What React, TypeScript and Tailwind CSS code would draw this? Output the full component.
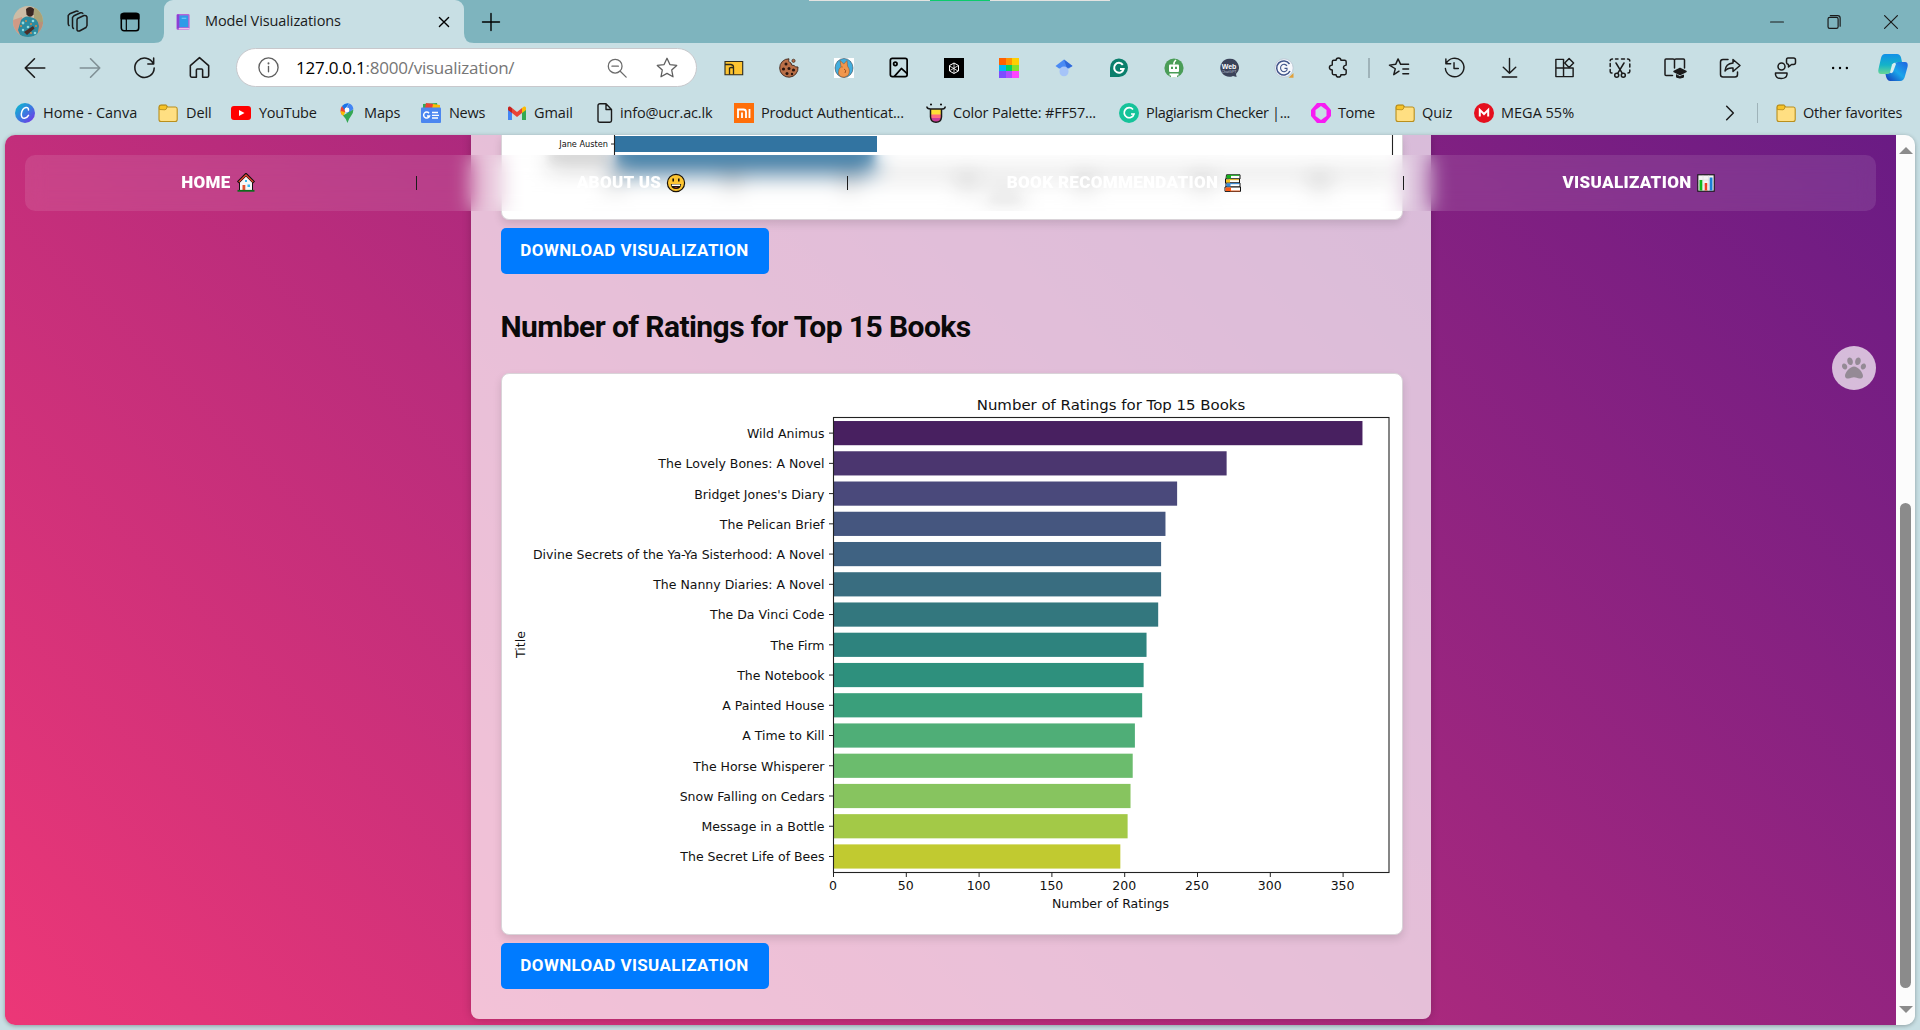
import React from "react";
import { FaPaw } from "react-icons/fa";

type P = { children?: React.ReactNode; className?: string; size?: number; sw?: number };

/* 24-unit outline icon */
const Line = ({ children, className = "text-[#1b1b1b]", size = 24, sw = 1.5 }: P) => (
  <svg width={size} height={size} viewBox="0 0 24 24" fill="none" stroke="currentColor" strokeWidth={sw} strokeLinecap="round" strokeLinejoin="round" className={`shrink-0 ${className}`}>
    {children}
  </svg>
);
/* 20-unit filled icon */
const Pic = ({ children, size = 20, className = "" }: P) => (
  <svg width={size} height={size} viewBox="0 0 20 20" className={`shrink-0 ${className}`}>
    {children}
  </svg>
);
const Cell = ({ children }: P) => <div className="flex h-full w-[55px] shrink-0 items-center justify-center">{children}</div>;

const Folder = () => (
  <Pic>
    <path d="M1 4.5Q1 2 3 2H7.5Q8.5 2 9 3L9.6 4H17.5Q19.2 4 19.2 6V16.5Q19.2 18.5 17.2 18.5H3Q1 18.5 1 16.5Z" fill="#ffdf82" stroke="#b98f1d" strokeWidth="1.1" />
    <path d="M1.3 6.5V4.5Q1.3 2.3 3 2.3H7.5Q8.5 2.5 9 4Q8.5 6.8 7 6.8Z" fill="#f7c325" stroke="#b98f1d" strokeWidth="0.9" />
  </Pic>
);

const Avatar = () => (
  <svg width="30" height="31" viewBox="0 0 30 31">
    <defs>
      <clipPath id="face"><ellipse cx="15" cy="15.5" rx="15" ry="15.5" /></clipPath>
    </defs>
    <g clipPath="url(#face)">
      <rect width="30" height="31" fill="#cdbca6" />
      <rect x="21" width="10" height="18" fill="#a9a276" />
      <path d="M0 14L9 11V31H0Z" fill="#cf9a86" />
      <path d="M25 16H30V31H22Z" fill="#b9907a" />
      <path d="M8 14Q12 9 17 11Q25 12 26 20L24 31H8L5 24Z" fill="#2c8ba0" />
      <path d="M13 3Q17-1 21 3L20.500 8.500Q17 13 13.500 8.500Z" fill="#3a2722" />
      <path d="M11 26L20 20L21.500 22.500L14 29Z" fill="#4a2d27" />
      <g fill="#8fdbe0"><circle cx="10" cy="17" r="1.4" /><circle cx="20" cy="15" r="1.3" /><circle cx="15" cy="21" r="1.3" /><circle cx="22" cy="27" r="1.3" /><circle cx="10" cy="24" r="1.2" /></g>
      <g fill="#d4874a"><circle cx="13" cy="15" r="1" /><circle cx="18" cy="18" r="1" /><circle cx="8" cy="20" r="1" /><circle cx="23" cy="20" r="1" /><circle cx="18" cy="27" r="1" /></g>
    </g>
  </svg>
);

const TabStrip = () => (
  <div className="relative flex h-[43px] shrink-0 items-center bg-[#7eb4be]">
    <div className="absolute left-[809px] top-0 flex h-px w-[301px] justify-center bg-[#e3e3e1]">
      <div className="h-px w-[60px] bg-[#0ccb6b]" />
    </div>
    <div className="flex w-[164px] items-center pl-[13px]">
      <Avatar />
      <Line className="ml-[23px] text-[#1b1b1b]" sw={1.5}>
        <path d="M11.5 8.5L18 5.5Q20.5 5 21 7V15.5L20 17.5L13.5 21Q11 21.5 11 19.5V10Z" />
        <path d="M7.5 18.5Q6.5 18 6.5 16.5V7.5L8 5.8L14.5 2.8Q16 2.4 16.8 3.4" />
        <path d="M3 15.5Q2.2 15 2.2 13.5V5.5L3.8 3.8L10 1.2Q11.2 .8 12 1.4" />
      </Line>
      <Line className="ml-[29px] text-black" size={22} sw={1.7}>
        <rect x="2.5" y="2.5" width="19" height="19" rx="3" />
        <path d="M2.5 3.5H21.5V8.5H2.5Z" fill="currentColor" />
        <path d="M8 9V21" strokeWidth="1.3" />
      </Line>
    </div>
    <div className="relative flex h-[43px] w-[300px] items-center rounded-t-[9px] bg-[#c8dfe4] pl-3">
      <svg width="10" height="10" className="absolute -left-[10px] bottom-0"><path d="M0 10Q10 10 10 0V10Z" fill="#c8dfe4" /></svg>
      <svg width="10" height="10" className="absolute -right-[10px] bottom-0"><path d="M10 10Q0 10 0 0V10Z" fill="#c8dfe4" /></svg>
      <svg width="15" height="18" viewBox="0 0 16 18">
        <rect x="0.5" y="0.5" width="14" height="17" rx="1.5" fill="#b565d8" />
        <rect x="3.5" y="2" width="9.500" height="12.500" fill="#2f9be8" />
        <path d="M1 1H3.500V16H1Z" fill="#8a3fd6" />
        <path d="M3 15.4H14.5V17H3Z" fill="#efc0e8" />
        <path d="M6 5H11" stroke="#7fd0ff" />
      </svg>
      <span className="ml-[14px] w-[215px] pb-[2px] text-[14.5px] tracking-[-0.1px] text-[#1a1a1a]">Model Visualizations</span>
      <Line size={22} className="ml-[13px] text-black" sw={1.5}><path d="M7 7L17 17M17 7L7 17" /></Line>
    </div>
    <Line size={24} className="ml-[15px] text-black" sw={1.4}><path d="M12 3.5V20.5M3.5 12H20.5" /></Line>
    <div className="ml-auto flex items-center">
      <div className="flex w-[57px] justify-center"><Line size={22} sw={1.3}><path d="M5 12H19" /></Line></div>
      <div className="flex w-[57px] justify-center"><Line size={22} sw={1.3}><rect x="5.5" y="7" width="11" height="12" rx="1.8" /><path d="M8 5H16Q18.7 5 18.7 7.5V16.5" /></Line></div>
      <div className="flex w-[58px] justify-center"><Line size={22} sw={1.3}><path d="M5 5L19 19M19 5L5 19" /></Line></div>
    </div>
  </div>
);

const Toolbar = () => (
  <div className="flex h-[49px] shrink-0 items-center pl-[7px]">
    <Cell><Line size={26}><path d="M21 12H3M11.5 3.5L3 12L11.5 20.5" /></Line></Cell>
    <Cell><Line size={26} className="text-[#809095]"><path d="M3 12H21M12.5 3.5L21 12L12.5 20.5" /></Line></Cell>
    <Cell><Line size={25}><path d="M20.5 8.5A9.3 9.3 0 1 0 21.3 12.5M20.8 3V8.6H15.2" /></Line></Cell>
    <Cell><Line size={25}><path d="M3.2 10.2L12 2.5L20.8 10.2V20Q20.8 21.3 19.5 21.3H15V14.5Q15 13.5 14 13.5H10Q9 13.5 9 14.5V21.3H4.5Q3.2 21.3 3.2 20Z" /></Line></Cell>
    <div className="ml-[9px] flex h-[39px] w-[461px] shrink-0 items-center rounded-full border border-[#c8c8cc] bg-white pl-5">
      <Line size={23} className="text-[#5f5f5f]" sw={1.4}><circle cx="12" cy="12" r="10" /><path d="M12 11V16.5" /><path d="M12 7.6V7.8" strokeWidth="2" /></Line>
      <span className="ml-[16px] w-[300px] text-[17px] tracking-[-0.24px] text-[#767676]"><span className="text-black">127.0.0.1</span>:8000/visualization/</span>
      <Line size={22} className="ml-[10px] text-[#6b6b6b]" sw={1.4}><circle cx="10" cy="10" r="7.5" /><path d="M15.5 15.5L22 22M6.5 10H13.5" /></Line>
      <Line size={24} className="ml-[27px] text-[#5f5f5f]" sw={1.3}><path d="M12 2.3L14.9 8.6L21.7 9.4L16.7 14L18 20.8L12 17.4L6 20.8L7.3 14L2.3 9.4L9.1 8.6Z" /></Line>
    </div>
    <div className="ml-[9px] flex h-full items-center">
      <Cell><Pic><path d="M1 3.5H18.7V16.8H1Z" fill="#fdc431" stroke="#2d2a1d" strokeWidth="1.1" /><path d="M1 6.5H7Q9.5 7 9.5 9V16.5M5.5 16.5V10Q7.5 9 9.5 10" fill="none" stroke="#2d2a1d" strokeWidth="1.3" /></Pic></Cell>
      <Cell><Pic><path d="M10 .8Q8.8 4 12 5Q12 8 15 7.5Q16.5 9.5 19 9A9.2 9.2 0 1 1 10 .8Z" fill="#b96f47" stroke="#3d2418" strokeWidth=".9" /><circle cx="14.5" cy="2.8" r="1.6" fill="#b96f47" stroke="#3d2418" strokeWidth=".7" /><g fill="#2a160f"><circle cx="7" cy="6" r="1.5" /><circle cx="4.5" cy="11" r="1.6" /><circle cx="10" cy="10.5" r="1.5" /><circle cx="14.5" cy="12" r="1.6" /><circle cx="8" cy="15.5" r="1.5" /><circle cx="13" cy="16" r="1.2" /></g></Pic></Cell>
      <Cell><Pic><rect width="20" height="20" fill="#fff" /><ellipse cx="10" cy="10" rx="9" ry="9.5" fill="#43aede" stroke="#37474f" strokeWidth=".6" /><path d="M4.500 16Q4 11 7 8.500L6 2.500L9.800 6L13 2.500L13.500 8Q17 13 14 17.500Q10 20.500 6.500 18.500Z" fill="#f0974e" stroke="#8c4a1c" strokeWidth=".5" /><path d="M8 8.500V9.500M10 11Q13 12 11 15" stroke="#a04f1c" fill="none" /></Pic></Cell>
      <Cell><Line size={23} className="text-black" sw={1.8}><rect x="3.5" y="2.5" width="17.5" height="19" rx="2" /><circle cx="8.7" cy="8.2" r="1.8" /><path d="M8 21L15 13L21 18.5" /></Line></Cell>
      <Cell><Pic><rect width="20" height="20" fill="#000" /><path d="M10 5L14.5 7.5V13L10 15.5L5.5 13V7.5Z" fill="none" stroke="#fff" strokeWidth="1" /><path d="M10 5V15M5.5 8L14 13M14.5 7.5L6 12.5" stroke="#fff" strokeWidth=".8" /></Pic></Cell>
      <Cell>
        <Pic>
          <path d="M0 0H7V7H0Z" fill="#ff6100" /><path d="M7 0H13V7H7Z" fill="#ff9400" /><path d="M13 0H20V7H13Z" fill="#ffcf00" />
          <path d="M0 7H7V13H0Z" fill="#00b8f5" /><path d="M7 7H13V13H7Z" fill="#06d160" /><path d="M13 7H20V13H13Z" fill="#86e02a" />
          <path d="M0 13H7V20H0Z" fill="#7c4dff" /><path d="M7 13H13V20H7Z" fill="#b04dff" /><path d="M13 13H20V20H13Z" fill="#ff45ff" />
        </Pic>
      </Cell>
      <Cell><Pic><path d="M10 1.5L18.5 8L15 10.5H5L1.5 8Z" fill="#4a8af4" /><path d="M10 1.5L18.5 8L13 10.5Z" fill="#2f68d8" /><rect x="5.5" y="8.5" width="9" height="9.8" rx="4.5" fill="#a6c4f8" /></Pic></Cell>
      <Cell><Pic><path d="M1 10A9 9.3 0 1 1 10 19H1Z" fill="#0b7f6c" /><path d="M13.8 6.8A4.8 5 0 1 0 14.6 11H11" fill="none" stroke="#fff" strokeWidth="2" /></Pic></Cell>
      <Cell><Pic><circle cx="10" cy="10" r="9.6" fill="#4a9d57" /><path d="M10 6.500Q9.500 4 12 2" fill="none" stroke="#fff" strokeWidth="1.6" /><rect x="5" y="6.5" width="10" height="7.5" rx="1" fill="#fff" /><path d="M7 8.800H9V11H7ZM11 8.800H13V11H11Z" fill="#4a9d57" /><path d="M5.500 15.5H14.500V17.5H13V19.5H7V17.5H5.500Z" fill="#fff" /></Pic></Cell>
      <Cell><Pic><path d="M10 .8A9 8.8 0 0 1 17 16L17.6 19L14 18A9 9 0 1 1 10 .8Z" fill="#3b4359" /><text x="10" y="10.5" textAnchor="middle" fontSize="7" fontWeight="700" fill="#fff" fontFamily="Liberation Sans">Web</text><text x="10" y="15" textAnchor="middle" fontSize="3.6" fill="#b7bdd0" fontFamily="Liberation Sans">ChatGPT</text></Pic></Cell>
      <Cell><Pic><circle cx="10" cy="10" r="9.2" fill="#f6f8fc" stroke="#b9c4d2" strokeWidth=".8" /><path d="M15.5 6A7 7 0 1 0 16 13" fill="none" stroke="#41558a" strokeWidth="1.5" /><path d="M13 8A3.5 3.7 0 1 0 13 12V10.4H10.5" fill="none" stroke="#41558a" strokeWidth="1.1" /><path d="M14.5 19.8L19.5 15V19.8Z" fill="#e2a03a" /></Pic></Cell>
      <Cell><Line size={23}><path d="M9.500 4.500Q9.500 2 12 2Q14.500 2 14.500 4.500H18.500Q20 4.500 20 6V9.500Q17.200 10 17.200 12Q17.200 14 20 14.500V18Q20 19.500 18.500 19.500H14.500Q14.500 22 12 22Q9.500 22 9.500 19.500H7Q5.500 19.500 5.500 18V14.500Q2.500 14.500 2.500 12Q2.500 9.500 5.500 9.500V6Q5.500 4.500 7 4.500Z" /></Line></Cell>
    </div>
    <div className="ml-[2px] h-5 w-0.5 bg-[#9fb3b9]" />
    <div className="ml-[2px] flex h-full items-center">
      <Cell><Line size={23}><path d="M11.5 15.8L6 19.5L7.6 13.3L1.5 9.5L8 8.7L10.5 3L13.2 8.7H21.5M15.5 13.5H21.5M15.5 18.5H21.5" /></Line></Cell>
      <Cell><Line size={23}><path d="M3 3V8H8M3.3 8A9.7 9.7 0 1 1 2.5 13M11.5 7V13H16" /></Line></Cell>
      <Cell><Line size={23}><path d="M12 2.5V18M5.5 11.8L12 18L18.5 11.8M4.5 22H19.5" /></Line></Cell>
      <Cell><Line size={23}><path d="M3 3.5H11V21.5H3ZM3 12.5H21V21.5H11" /><path d="M16.8 2.5L21.5 7.2L16.8 11.9L12.2 7.2Z" /></Line></Cell>
      <Cell><Line size={24}><path d="M4 17H3.5Q2.2 17 2.2 15.5V13.5M2.2 10.5V7.5M2.2 4.8Q2.2 3 4.5 3M7.5 3H10M13.5 3H16.5M19.5 3Q21.8 3 21.8 5M21.8 8V11M21.8 14V15.5Q21.8 17 20 17" /><path d="M8 7L14.3 17.3M16 7L9.7 17.3" /><circle cx="8.7" cy="19.3" r="2" /><circle cx="15.3" cy="19.3" r="2" /></Line></Cell>
      <Cell><Line size={24}><path d="M11.5 4Q11.5 3 10 3H3Q2 3 2 4V18.5Q2 19.5 3 19.5H9.5M11.5 4V12M11.5 4Q11.5 3 13 3H20.5Q21.5 3 21.5 4V12" /><path d="M17 12.5L23 15.5L17 18.5L11 15.5Z" fill="currentColor" /><path d="M13.5 19V21.2Q17 23 20.5 21.2V19L17 20.5Z" fill="currentColor" strokeWidth="1" /></Line></Cell>
      <Cell><Line size={24}><path d="M10 3.5H5Q2.5 3.5 2.5 6V18.5Q2.5 21 5 21H17Q19.5 21 19.5 18.5V16" /><path d="M15 3.5L22 9.5L15 15.5V12Q9.5 11.5 7 15Q7.5 7.5 15 7Z" /></Line></Cell>
      <Cell><Line size={24}><circle cx="8.5" cy="10.5" r="3.5" /><path d="M2.5 17H14V18.5Q13.5 22.5 8.2 22.5Q3 22.5 2.5 18.5Z" /><path d="M15 2H20.5Q22.5 2 22.5 4V6.5Q22.5 8.5 20.5 8.5H18.5L15.5 11V8.5Q13.5 8 13.5 6.5V4Q13.5 2 15 2Z" /></Line></Cell>
      <Cell><Line size={22} className="text-black" sw={2.6}><path d="M4.500 12V12.1M12 12V12.1M19.500 12V12.1" /></Line></Cell>
    </div>
    <svg width="30" height="27" viewBox="0 0 30 27" className="ml-[11px] shrink-0">
      <defs>
        <linearGradient id="cpA" x1=".3" y1="0" x2=".3" y2="1"><stop offset="0" stopColor="#1190e8" /><stop offset=".55" stopColor="#14b3c8" /><stop offset="1" stopColor="#68d795" /></linearGradient>
        <linearGradient id="cpB" x1="1" y1="0" x2="0" y2="1"><stop offset="0" stopColor="#1f63e0" /><stop offset=".5" stopColor="#1aa6ea" /><stop offset="1" stopColor="#1239b8" /></linearGradient>
      </defs>
      <path d="M7 0H19Q22 0 23 3.5L24 8H20Q17 8 16 11L13 17Q12 20 9 20H3Q-.5 20 .5 15L3 4Q4 0 7 0Z" fill="url(#cpA)" />
      <path d="M23 8H27Q30.5 8 29.5 13L27 22Q26 27 22 27H12Q8.500 27 7.500 20H9Q12 20 13 17L16 11Q17 8 20 8Z" fill="url(#cpB)" />
      <path d="M14 10.500L12 18.500Q13.500 20 15 18L18 10Q16.500 7.500 14 10.500Z" fill="#d8eef0" />
    </svg>
  </div>
);

const Bm = ({ children, className }: P) => <div className={`flex shrink-0 items-center whitespace-nowrap ${className}`}>{children}</div>;

const Bookmarks = () => (
  <div className="flex h-[43px] shrink-0 items-center pb-[1px] pl-[15px] text-[14.5px] tracking-[-0.13px] text-[#1a1a1a]">
    <Bm className="w-[143px] gap-2"><Pic><defs><linearGradient id="cv" x1="0" y1="0" x2="1" y2="1"><stop offset="0" stopColor="#04c3cc" /><stop offset=".5" stopColor="#3a7be0" /><stop offset="1" stopColor="#7d2ae8" /></linearGradient></defs><circle cx="10" cy="10" r="10" fill="url(#cv)" /><path d="M13.500 7Q13.500 4.200 11 4.500Q7 5.200 6.300 11Q6.200 15.500 9.500 15.300Q12 15 13.500 12.300" fill="none" stroke="#fff" strokeWidth="1.500" strokeLinecap="round" /></Pic><span className="tracking-[-0.03px]">Home - Canva</span></Bm>
    <Bm className="w-[73px] gap-2"><Folder /><span>Dell</span></Bm>
    <Bm className="w-[106px] gap-2"><Pic><rect y="3" width="20" height="14" rx="3" fill="#f00" /><path d="M8 7L13.500 10L8 13Z" fill="#fff" /></Pic><span className="tracking-[-0.3px]">YouTube</span></Bm>
    <Bm className="w-[84px] gap-[7px]"><Pic><path d="M3.500 7.500A6.500 7 0 0 1 5 3L10 7.500L5 12Q3.500 10 3.500 7.500Z" fill="#ea4335" /><path d="M5 3Q8-.5 12 .4L7.500 7Z" fill="#1a73e8" /><path d="M12 .4Q16 1.800 16.400 6L11 11L8 8Z" fill="#4285f4" /><path d="M3.500 8L8 9L6.500 13.500Q3.500 11 3.500 8Z" fill="#fbbc04" /><path d="M16.400 6.500Q16.500 10 14 13Q11.500 16 10.500 20Q9 15.500 6 12.500Z" fill="#34a853" /><circle cx="10" cy="7" r="2.400" fill="#fff" /></Pic><span>Maps</span></Bm>
    <Bm className="w-[86px] gap-2"><Pic><path d="M2 1L16 0L17 6H2Z" fill="#34a853" /><path d="M5 0L13 1V5H4Z" fill="#ea4335" /><path d="M12 1L19 2V6H11Z" fill="#fbbc04" /><rect y="4.500" width="20" height="15.500" rx="1" fill="#4b86f0" /><path d="M8 10.200A3 3 0 1 0 8.500 13H6" fill="none" stroke="#fff" strokeWidth="1.500" /><path d="M11 9.500H17M11 12.300H18M11 15H17" stroke="#fff" strokeWidth="1.300" /></Pic><span className="tracking-[-0.3px]">News</span></Bm>
    <Bm className="w-[88px] gap-[7px]"><Pic><path d="M1 5V17H5V9Z" fill="#4285f4" /><path d="M15 9V17H19V5Z" fill="#34a853" /><path d="M1 5Q1 3 3 3.500L5 5V10L1 7Z" fill="#c5221f" /><path d="M5 5L10 9L15 5V10L10 14L5 10Z" fill="#ea4335" /><path d="M15 5L17 3.500Q19 3 19 5V7L15 10Z" fill="#fbbc04" /></Pic><span>Gmail</span></Bm>
    <Bm className="w-[139px] gap-[5px]"><Pic><path d="M3 2.500Q3 .8 5 .8H11L16.500 6.500V17.500Q16.500 19.200 14.800 19.200H5Q3 19.200 3 17.500ZM11 1V6.500H16.500" fill="none" stroke="#1a1a1a" strokeWidth="1.400" strokeLinejoin="round" /></Pic><span className="tracking-[-0.17px]">info@ucr.ac.lk</span></Bm>
    <Bm className="w-[192px] gap-[7px]"><Pic><rect width="20" height="20" fill="#ff6f0a" /><path d="M4 15V6.500H9.500Q12 6.500 12 9V15M8 9.500V15M15.500 6V15" fill="none" stroke="#fff" strokeWidth="1.800" /></Pic><span className="tracking-[-0.17px]">Product Authenticat...</span></Bm>
    <Bm className="w-[193px] gap-[7px]"><Pic><path d="M4.500 6H15.500V14Q15 19.200 10 19.200Q5 19.200 4.500 14Z" fill="#ffdf36" /><path d="M4.500 11.500H15.500V15Q14 19 10 19Q5.500 19 4.500 15Z" fill="#ff6b81" /><path d="M5 15H15Q13 19 10 19Q7 19 5 15Z" fill="#c83d9a" /><path d="M.8 3.500Q1 6 4.500 6H15.500Q19 6 19.300 3.500M4.500 6V14Q5 19.200 10 19.200Q15 19.200 15.500 14V6" fill="none" stroke="#1a1a1a" strokeWidth="1.500" /><circle cx="5" cy="1.500" r="1" /><circle cx="15" cy="1.500" r="1" /></Pic><span className="tracking-[-0.17px]">Color Palette: #FF57...</span></Bm>
    <Bm className="w-[192px] gap-[7px]"><Pic><circle cx="10" cy="10" r="10" fill="#15c39a" /><path d="M14 6.500A5 5 0 1 0 15 11H12" fill="none" stroke="#fff" strokeWidth="1.700" /></Pic><span className="tracking-[-0.33px]">Plagiarism Checker |...</span></Bm>
    <Bm className="w-[84px] gap-[7px]"><Pic><path d="M6 0H14L20 7V13L14 20H6L0 13V7Z" fill="#f71cf3" /><path d="M10 3L15.500 7V13L10 17L4.500 13V7Z" fill="#c8dfe4" /></Pic><span className="tracking-[-0.4px]">Tome</span></Bm>
    <Bm className="w-[79px] gap-[7px]"><Folder /><span>Quiz</span></Bm>
    <Bm className="w-[200px] gap-[7px]"><Pic><circle cx="10" cy="10" r="10" fill="#e50f1e" /><path d="M5.800 13.500V6.800L10 11L14.200 6.800V13.500" fill="none" stroke="#fff" strokeWidth="2" /></Pic><span className="tracking-[0px]">MEGA 55%</span></Bm>
    <div className="ml-auto flex items-center pr-[17px]">
      <Line size={20} className="text-[#1b1b1b]" sw={1.8}><path d="M8 4L16 12L8 20" /></Line>
      <div className="ml-[17px] mr-[18px] h-5 w-px bg-[#9fb3b9]" />
      <Bm className="w-[127px] gap-[7px]"><Folder /><span className="tracking-[-0.17px]">Other favorites</span></Bm>
    </div>
  </div>
);

/* Bottom slice of the author chart; everything below y=20 sits behind the frosted nav */
const AuthorChart = () => (
  <svg width="900" height="84" className="block" fontFamily="DejaVu Sans" fill="#111">
    <defs>
      <filter id="soft" x="-20%" y="-50%" width="140%" height="200%"><feGaussianBlur stdDeviation="4" /></filter>
      <clipPath id="behind"><rect y="20" width="900" height="64" /></clipPath>
    </defs>
    <rect x="113" y="1" width="262" height="16" fill="#3274a1" />
    <g clipPath="url(#behind)">
      <g filter="url(#soft)">
        <rect x="113" y="14" width="260" height="24" fill="#3274a1" />
        <rect x="46" y="16" width="62" height="19" fill="#cfcfcf" />
        <rect x="113" y="38" width="778" height="2" fill="#555" />
        {[0, 1, 2, 3, 4, 5, 6].map((i) => (
          <rect key={i} x={106 + i * 117.5} y="42" width="13" height="10" fill="#a8a8a8" />
        ))}
        <rect x="485" y="56" width="36" height="10" fill="#cfcfcf" />
      </g>
    </g>
    <path d="M112.500 0V20M890.500 0V20" fill="none" stroke="#222" strokeWidth="1.100" />
    <path d="M109 9H112" stroke="#222" />
    <text x="106" y="12" textAnchor="end" fontSize="8.200">Jane Austen</text>
  </svg>
);

const books: [string, number, string][] = [
  ["Wild Animus", 363.300, "#482060"],
  ["The Lovely Bones: A Novel", 270, "#4b366f"],
  ["Bridget Jones's Diary", 236, "#4a497b"],
  ["The Pelican Brief", 228, "#45567f"],
  ["Divine Secrets of the Ya-Ya Sisterhood: A Novel", 225, "#3f6282"],
  ["The Nanny Diaries: A Novel", 225, "#396d80"],
  ["The Da Vinci Code", 223, "#33777e"],
  ["The Firm", 215, "#2e837e"],
  ["The Notebook", 213, "#2e907d"],
  ["A Painted House", 212, "#3a9f7b"],
  ["A Time to Kill", 207, "#4fae77"],
  ["The Horse Whisperer", 205.500, "#6bbc6d"],
  ["Snow Falling on Cedars", 204, "#87c45f"],
  ["Message in a Bottle", 202, "#a3c947"],
  ["The Secret Life of Bees", 197, "#c1ca30"],
];
const X0 = 331.500, Y0 = 43.500, ROW = 30.240, UNIT = 1.456;

const BooksChart = () => (
  <svg width="900" height="560" className="block" fontFamily="DejaVu Sans" fill="#111" fontSize="12.500">
    <text x="609" y="35.500" textAnchor="middle" fontSize="14.950">Number of Ratings for Top 15 Books</text>
    {books.map(([t, v, c], i) => (
      <g key={t}>
        <rect x={X0} y={Y0 + 0.500 + ROW * (i + 0.1)} width={v * UNIT} height={ROW * 0.8} fill={c} />
        <path d={`M${X0 - 4.500} ${Y0 + 0.500 + ROW * (i + 0.5)}H${X0}`} stroke="#222" />
        <text x={X0 - 9} y={Y0 + 0.500 + ROW * (i + 0.5) + 4.900} textAnchor="end">{t}</text>
      </g>
    ))}
    <rect x={X0} y={Y0} width="555.500" height="455" fill="none" stroke="#222" strokeWidth="1.100" />
    {[0, 50, 100, 150, 200, 250, 300, 350].map((v) => (
      <g key={v}>
        <path d={`M${X0 + v * UNIT} 498.500V503`} stroke="#222" />
        <text x={X0 + v * UNIT - 0.500} y="516" textAnchor="middle">{v}</text>
      </g>
    ))}
    <text x="608.500" y="534" textAnchor="middle">Number of Ratings</text>
    <text transform="translate(22.500 270.500) rotate(-90)" textAnchor="middle">Title</text>
  </svg>
);

const Download = () => (
  <button className="mt-2 flex h-[46px] w-[268px] items-center justify-center rounded-[5px] bg-[#007bff] text-[17px] font-bold tracking-[0.39px] text-white">DOWNLOAD VISUALIZATION</button>
);

const Emoji = ({ children }: P) => <svg width="20" height="20" viewBox="0 0 20 20" className="shrink-0">{children}</svg>;
const Sep = () => <div className="flex w-2 justify-center"><div className="h-[14px] w-px bg-[#1c1c1c]" /></div>;
const NavItem = ({ children, className }: P) => <div className={`flex items-center justify-center gap-[5px] ${className}`}>{children}</div>;

const Nav = () => (
  <nav className="absolute left-5 top-5 flex h-[56px] w-[1851px] items-center rounded-[10px] bg-white/10 text-[17px] font-black tracking-[0.33px] text-white backdrop-blur-[10px]">
    <NavItem className="w-[387px]">
      <span>HOME</span>
      <Emoji><path d="M3.500 9L10 2.500L16.500 9V17.500H3.500Z" fill="#f6f6f6" stroke="#111" strokeWidth="1" /><path d="M2 9.500L10 1.500L18 9.500" fill="none" stroke="#111" strokeWidth="3" /><path d="M2.800 9L10 2L17.200 9" fill="none" stroke="#e8432e" strokeWidth="1.300" /><rect x="6.500" y="12" width="2.800" height="5.500" fill="#e2512f" /><path d="M11.500 11.500H14V14H11.500ZM9 7H11V9H9Z" fill="#35b7ef" /><path d="M1.500 17.800H18.500" stroke="#0c6b1c" strokeWidth="1.800" /></Emoji>
    </NavItem>
    <Sep />
    <NavItem className="w-[423px]">
      <span>ABOUT US</span>
      <Emoji><circle cx="10" cy="10" r="8.600" fill="#fdc531" stroke="#1a1208" strokeWidth="1.200" /><path d="M7.200 5.500V8.500M12.800 5.500V8.500" stroke="#1a1208" strokeWidth="1.600" /><path d="M4.800 11H15.200Q15 16 10 16Q5 16 4.800 11Z" fill="#1a1208" /><path d="M5.800 11.400H14.200V13H5.800Z" fill="#fff" /><path d="M8 15Q10 13.600 12 15Z" fill="#e23a2f" /></Emoji>
    </NavItem>
    <Sep />
    <NavItem className="w-[548px]">
      <span>BOOK RECOMMENDATION</span>
      <Emoji>
        <g stroke="#111" strokeWidth="1">
          <path d="M3.500 1.800H17V6H3Z" fill="#fff" /><path d="M2.500 6H16.500V10H2.500Z" fill="#fff" /><path d="M3 10H17V14H3Z" fill="#fff" /><path d="M2 14H17.500V18.400H2Z" fill="#fff" />
        </g>
        <path d="M3.600 2H8V5.500H3.600Z" fill="#16b01d" /><path d="M3 6.500H7V9.500H3Z" fill="#f4c01f" /><path d="M3.500 10.500H7.500V13.500H3.500Z" fill="#2c8be0" /><path d="M2.500 14.500H8V18H2.500Z" fill="#ff5a12" />
        <path d="M7 2.300H16.500" stroke="#16b01d" /><path d="M6 6.700H16" stroke="#f4c01f" /><path d="M7 10.700H16.500" stroke="#2c8be0" /><path d="M7 18H17" stroke="#ff5a12" strokeWidth=".8" />
      </Emoji>
    </NavItem>
    <Sep />
    <NavItem className="w-[465px]">
      <span>VISUALIZATION</span>
      <Emoji><rect x="1.800" y="1.800" width="16.400" height="16.400" fill="#f4f4f4" stroke="#111" strokeWidth="1.100" /><path d="M7 2.500V17.500M12.500 2.500V17.500M2.500 7H17.500M2.500 12H17.500" stroke="#ddd" strokeWidth=".6" /><rect x="3.500" y="7" width="2.800" height="10.500" fill="#12b81c" /><rect x="8.700" y="10" width="2.500" height="7.500" fill="#ee3f24" /><rect x="13.700" y="4.500" width="2.800" height="13" fill="#1b80d8" /></Emoji>
    </NavItem>
  </nav>
);

export default function App() {
  return (
    <div className="flex h-[1030px] w-[1920px] flex-col overflow-hidden bg-[#c8dfe4] font-['Open_Sans',sans-serif]">
      <TabStrip />
      <Toolbar />
      <Bookmarks />
      <div className="mx-[5px] flex h-[890px] overflow-hidden rounded-[10px] shadow-[0_1px_4px_rgba(0,0,0,0.3)]">
        <div className="relative h-[890px] w-[1891px] overflow-hidden bg-[linear-gradient(45deg,#ec3777,#6a1b84)] font-['Roboto',sans-serif]">
          <main className="mx-auto h-[884px] w-[960px] rounded-b-[8px] bg-white/70 px-[30px] shadow-[0_0_10px_rgba(0,0,0,0.2)]">
            <div className="h-[85px] w-[902px] overflow-hidden rounded-b-[8px] border border-t-0 border-[#d9d3d8] bg-white shadow-[0_4px_8px_rgba(0,0,0,0.12)]"><AuthorChart /></div>
            <Download />
            <h2 className="mt-[34px] h-[65px] text-[30px] font-bold leading-[38px] tracking-[-0.58px] text-[#0a0a0a]">Number of Ratings for Top 15 Books</h2>
            <div className="h-[562px] w-[902px] overflow-hidden rounded-[8px] border border-[#d9d3d8] bg-white shadow-[0_4px_8px_rgba(0,0,0,0.12)]"><BooksChart /></div>
            <Download />
          </main>
          <Nav />
          <div className="absolute left-[1827px] top-[211px] flex size-11 items-center justify-center rounded-full bg-white/70 text-[#948a95]"><FaPaw size={24} /></div>
        </div>
        <div className="flex w-[19px] flex-col items-center bg-[#fcfcfc]">
          <svg width="14" height="8" className="mt-[12px]"><path d="M7 0L14 7H0Z" fill="#8b8b8b" /></svg>
          <div className="mt-[348px] h-[485px] w-[11px] rounded-full bg-[#8b8b8b]" />
          <svg width="14" height="8" className="mt-[18px]"><path d="M7 7L14 0H0Z" fill="#8b8b8b" /></svg>
        </div>
      </div>
    </div>
  );
}
